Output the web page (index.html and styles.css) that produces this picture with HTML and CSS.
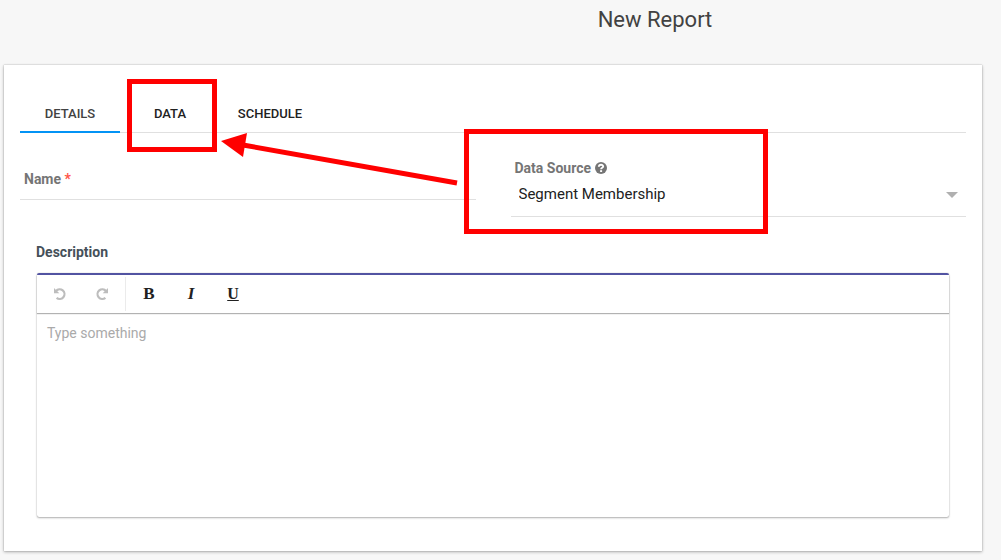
FILE: index.html
```html
<!DOCTYPE html>
<html lang="en">
<head>
<meta charset="utf-8">
<meta name="viewport" content="width=device-width, initial-scale=1">
<title>New Report</title>
<link rel="stylesheet" href="styles.css">
</head>
<body>
<header class="page-header"><h1 class="page-title">New Report</h1></header>
<main class="card">
  <nav class="tabs" aria-label="Report sections">
    <button class="tab tab-active" type="button">DETAILS</button>
    <button class="tab" type="button">DATA<span class="mark mark-tab"></span></button>
    <button class="tab" type="button">SCHEDULE</button>
  </nav>
  <form class="form">
    <div class="fields">
      <div class="field-name">
        <label class="label" for="name">Name <span class="required">*</span></label>
        <input class="name-input" id="name" type="text" required>
      </div>
      <div class="field-source">
        <div class="label-row">
          <label class="label" for="source">Data Source</label>
          <svg class="help" viewBox="0 0 12 12" aria-hidden="true"><circle cx="6" cy="6" r="6" fill="#757575"/><path d="M3.8 4.7C4 2 8.2 2.1 8.2 4.5C8.2 5.8 6.1 5.7 6.1 7.2" fill="none" stroke="#fff" stroke-width="1.9"/><rect x="5.1" y="8.2" width="2" height="1.8" fill="#fff"/></svg>
        </div>
        <div class="select-row">
          <select class="select" id="source"><option>Segment Membership</option></select>
          <svg class="caret" viewBox="0 0 12 6" aria-hidden="true"><path d="M0 0H12L6 6Z" fill="#b0b0b0"/></svg>
        </div>
        <span class="mark mark-source"></span>
      </div>
    </div>
    <div class="description">
      <label class="label label-dark" for="description">Description</label>
      <div class="editor">
        <div class="toolbar">
          <button class="tool" type="button" aria-label="Undo"><svg class="tool-icon" viewBox="0 0 14 14"><path d="M3 4A4.8 4.8 0 1 1 3.6 10.8" fill="none" stroke="#bdbdbd" stroke-width="2.2"/><path d="M1 1V6.3H6.3Z" fill="#bdbdbd"/></svg></button>
          <button class="tool" type="button" aria-label="Redo"><svg class="tool-icon" viewBox="0 0 14 14"><path d="M11 4A4.8 4.8 0 1 0 10.4 10.8" fill="none" stroke="#bdbdbd" stroke-width="2.2"/><path d="M13 1V6.3H7.7Z" fill="#bdbdbd"/></svg></button>
          <span class="divider"></span>
          <button class="tool" type="button"><b>B</b></button>
          <button class="tool" type="button"><i class="italic">I</i></button>
          <button class="tool" type="button"><u class="underline">U</u></button>
        </div>
        <textarea class="editor-text" id="description" placeholder="Type something"></textarea>
      </div>
    </div>
  </form>
  <svg class="arrow" viewBox="0 0 240 60" aria-hidden="true"><path d="M22 13L236 51" stroke="#f00" stroke-width="5"/><path d="M0 9L26 1L22 25Z" fill="#f00"/></svg>
</main>
</body>
</html>
```

FILE: styles.css
```css
* { box-sizing: border-box; }
body {
  margin: 0;
  background: #f7f7f7;
  color: #212121;
  font-family: Roboto, "Liberation Sans", sans-serif;
  font-size: 14px;
}
button, input, select, textarea { font: inherit; color: inherit; background: none; border: 0; border-radius: 0; margin: 0; padding: 0; outline: 0; }
.page-header { padding: 5px 0 30px 309px; text-align: center; }
.page-title { margin: 0; font-size: 22px; line-height: 30px; font-weight: 400; color: #424242; }
.card {
  position: relative;
  margin: 0 19px 8px 4px;
  padding: 29px 16px 34px;
  background: #fff;
  box-shadow: 0 1px 3px rgba(0,0,0,.3), 0 0 1px rgba(0,0,0,.3);
}
.tabs { display: flex; border-bottom: 1px solid #e0e0e0; }
.tab {
  position: relative;
  width: 100px;
  height: 39px;
  margin-bottom: -1px;
  padding-top: 2px;
  border-bottom: 2px solid transparent;
  font-size: 13px;
  font-weight: 500;
}
.tab-active { color: #424242; border-bottom-color: #0393f5; }
.mark { position: absolute; border: 5px solid #f00; pointer-events: none; }
.mark-tab { left: 7px; top: -15px; width: 90px; height: 73px; }
.mark-source { left: -47px; top: -4px; width: 304px; height: 105px; }
.arrow { position: absolute; left: 217px; top: 67px; width: 240px; height: 60px; pointer-events: none; }
.fields { display: grid; grid-template-columns: 1fr 1fr; column-gap: 35px; align-items: start; }
.field-name { display: flex; align-items: center; gap: 8px; height: 42px; margin-top: 25px; padding-left: 4px; border-bottom: 1px solid #e0e0e0; }
.name-input { flex: 1; min-width: 0; height: 32px; }
.label { font-weight: 700; color: #757575; line-height: 20px; }
.required { color: #ff5548; }
.field-source { position: relative; padding-top: 25px; border-bottom: 1px solid #e0e0e0; }
.label-row { display: flex; align-items: center; gap: 4px; padding-left: 4px; }
.help { width: 12px; height: 12px; }
.select-row { position: relative; height: 38px; padding-top: 4px; }
.select { appearance: none; width: 100%; height: 24px; padding: 0 24px 0 8px; font-size: 15px; line-height: 24px; }
.caret { position: absolute; right: 8px; top: 14px; width: 12px; height: 6px; pointer-events: none; }
.description { display: flex; flex-direction: column; gap: 11px; padding: 25px 17px 0 16px; }
.label-dark { color: #455059; }
.editor { margin-left: 1px; border-top: 2px solid #5253a2; border-radius: 2px; box-shadow: 0 1px 2px rgba(0,0,0,.3), 0 0 1px rgba(0,0,0,.3); }
.toolbar { position: relative; display: flex; align-items: center; height: 38px; padding-left: 2px; box-shadow: 0 1px 1px rgba(0,0,0,.3); }
.tool { width: 42px; height: 38px; font-family: "Liberation Serif", serif; font-size: 17px; }
.tool-icon { display: block; width: 14px; height: 14px; margin: auto; }
.italic { font-weight: 700; }
.underline { font-size: 16px; font-weight: 700; }
.divider { width: 1px; height: 34px; margin: 0 2px; background: #ebebeb; }
.editor-text { display: block; width: 100%; height: 204px; padding: 11px 10px; line-height: 18px; resize: none; }
.editor-text::placeholder { color: #aaa; opacity: 1; }
```
